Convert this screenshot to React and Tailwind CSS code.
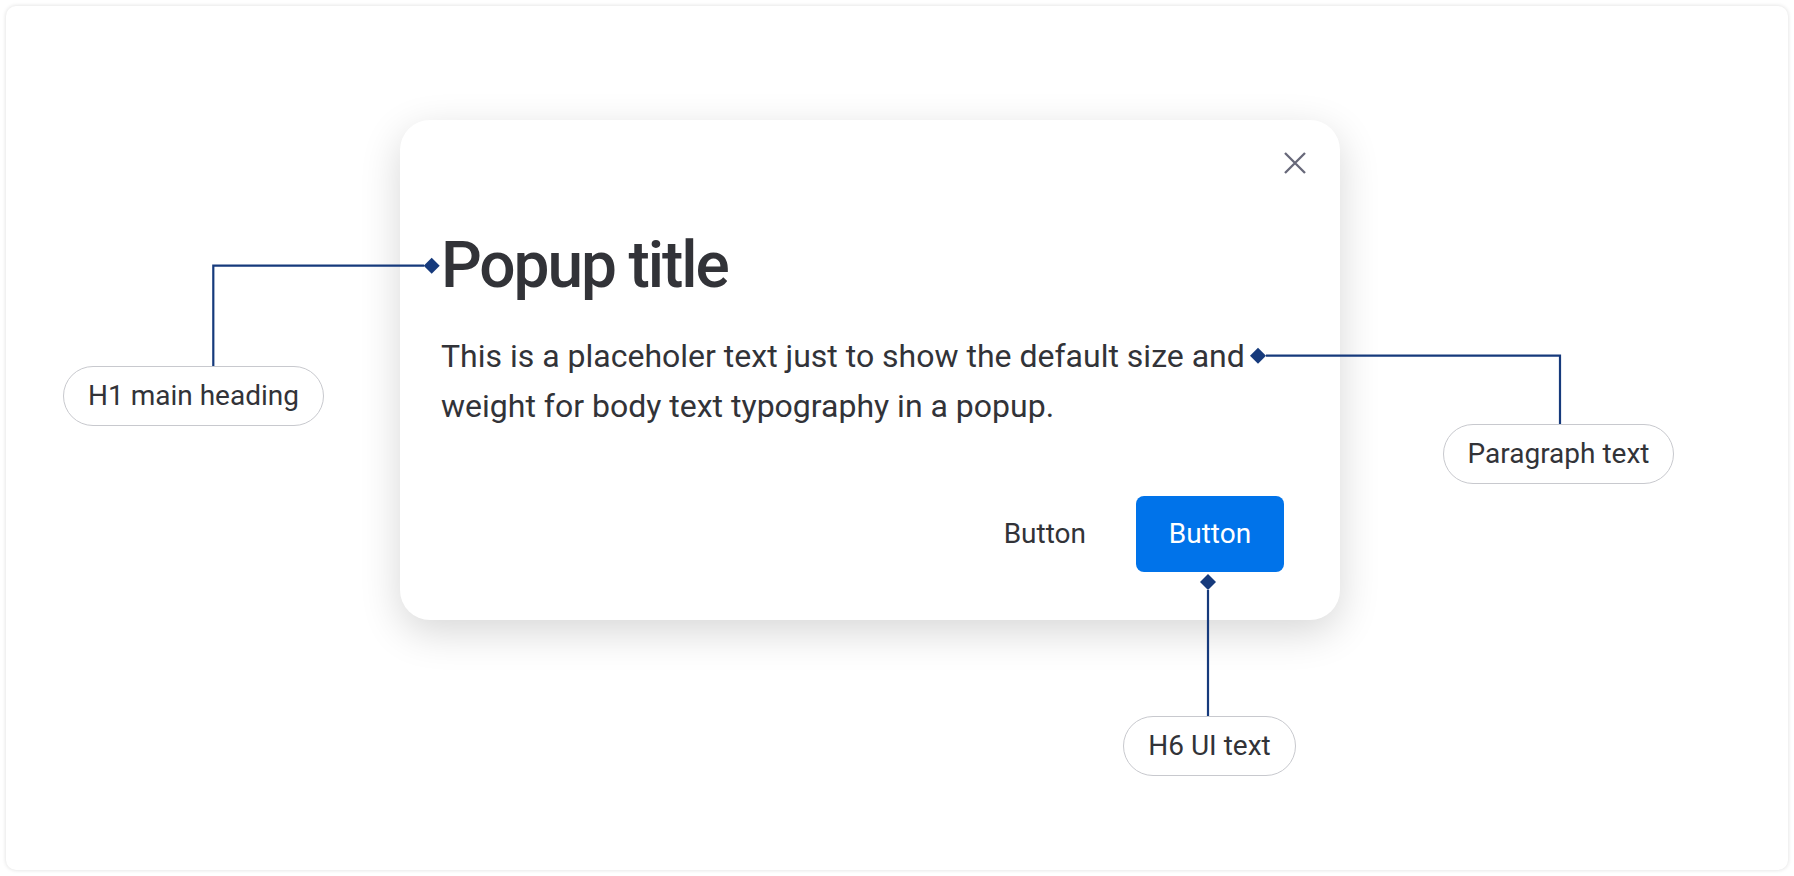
import React from 'react'

const ink = '#163a7c'

function Pill({ className, children }) {
  return (
    <div className={`absolute h-[60px] rounded-full border-[1.5px] border-[#c8c9ce] bg-white flex items-center justify-center text-[28px] text-[#323338] ${className}`}>
      {children}
    </div>
  )
}

function Connectors() {
  const d = (x, y) => `${x},${y - 8} ${x + 8},${y} ${x},${y + 8} ${x - 8},${y}`
  return (
    <svg className="absolute top-0 left-0 w-[1794px] h-[876px] pointer-events-none" viewBox="0 0 1794 876">
      <g stroke={ink} strokeWidth="2.2" fill="none">
        <polyline points="424,265.7 213.3,265.7 213.3,366" />
        <polyline points="1266,355.7 1560,355.7 1560,424" />
        <polyline points="1208,590 1208,716" />
      </g>
      <g fill={ink}>
        <polygon points={d(431.7, 265.7)} />
        <polygon points={d(1258, 355.7)} />
        <polygon points={d(1208, 582)} />
      </g>
    </svg>
  )
}

export default function App() {
  return (
    <div className="relative w-[1794px] h-[876px] bg-white p-[6px] font-['Roboto',sans-serif] text-[#323338]">
      <div className="w-full h-full rounded-[10px] bg-white shadow-[0_0_4px_rgba(0,0,0,0.14)] pl-[394px] pt-[114px]">
        <div className="w-[940px] h-[500px] rounded-[30px] bg-white shadow-[0_12px_40px_rgba(0,0,0,0.16)] pl-[41px] pr-[56px] pt-[23px] pb-[48px] flex flex-col">
          <div className="flex justify-end -mr-[31px]">
            <button className="w-10 h-10 flex items-center justify-center text-[#676879]">
              <svg width="22" height="22" viewBox="0 0 22 22">
                <path d="M1 1 21 21M21 1 1 21" stroke="currentColor" strokeWidth="2.3" />
              </svg>
            </button>
          </div>
          <h1 className="mt-[51px] text-[64px] leading-[64px] font-medium tracking-[-2.1px]">Popup title</h1>
          <p className="mt-[33px] text-[32px] leading-[50px] w-[820px]">
            This is a placeholer text just to show the default size and weight for body text typography in a popup.
          </p>
          <div className="mt-auto flex justify-end items-center gap-[50px]">
            <button className="text-[28px] h-[76px] px-0">Button</button>
            <button className="text-[28px] h-[76px] w-[148px] rounded-[8px] bg-[#0073ea] text-white">Button</button>
          </div>
        </div>
      </div>
      <Connectors />
      <Pill className="left-[63px] top-[366px] w-[261px]">H1 main heading</Pill>
      <Pill className="left-[1443px] top-[424px] w-[231px]">Paragraph text</Pill>
      <Pill className="left-[1123px] top-[716px] w-[173px]">H6 UI text</Pill>
    </div>
  )
}
